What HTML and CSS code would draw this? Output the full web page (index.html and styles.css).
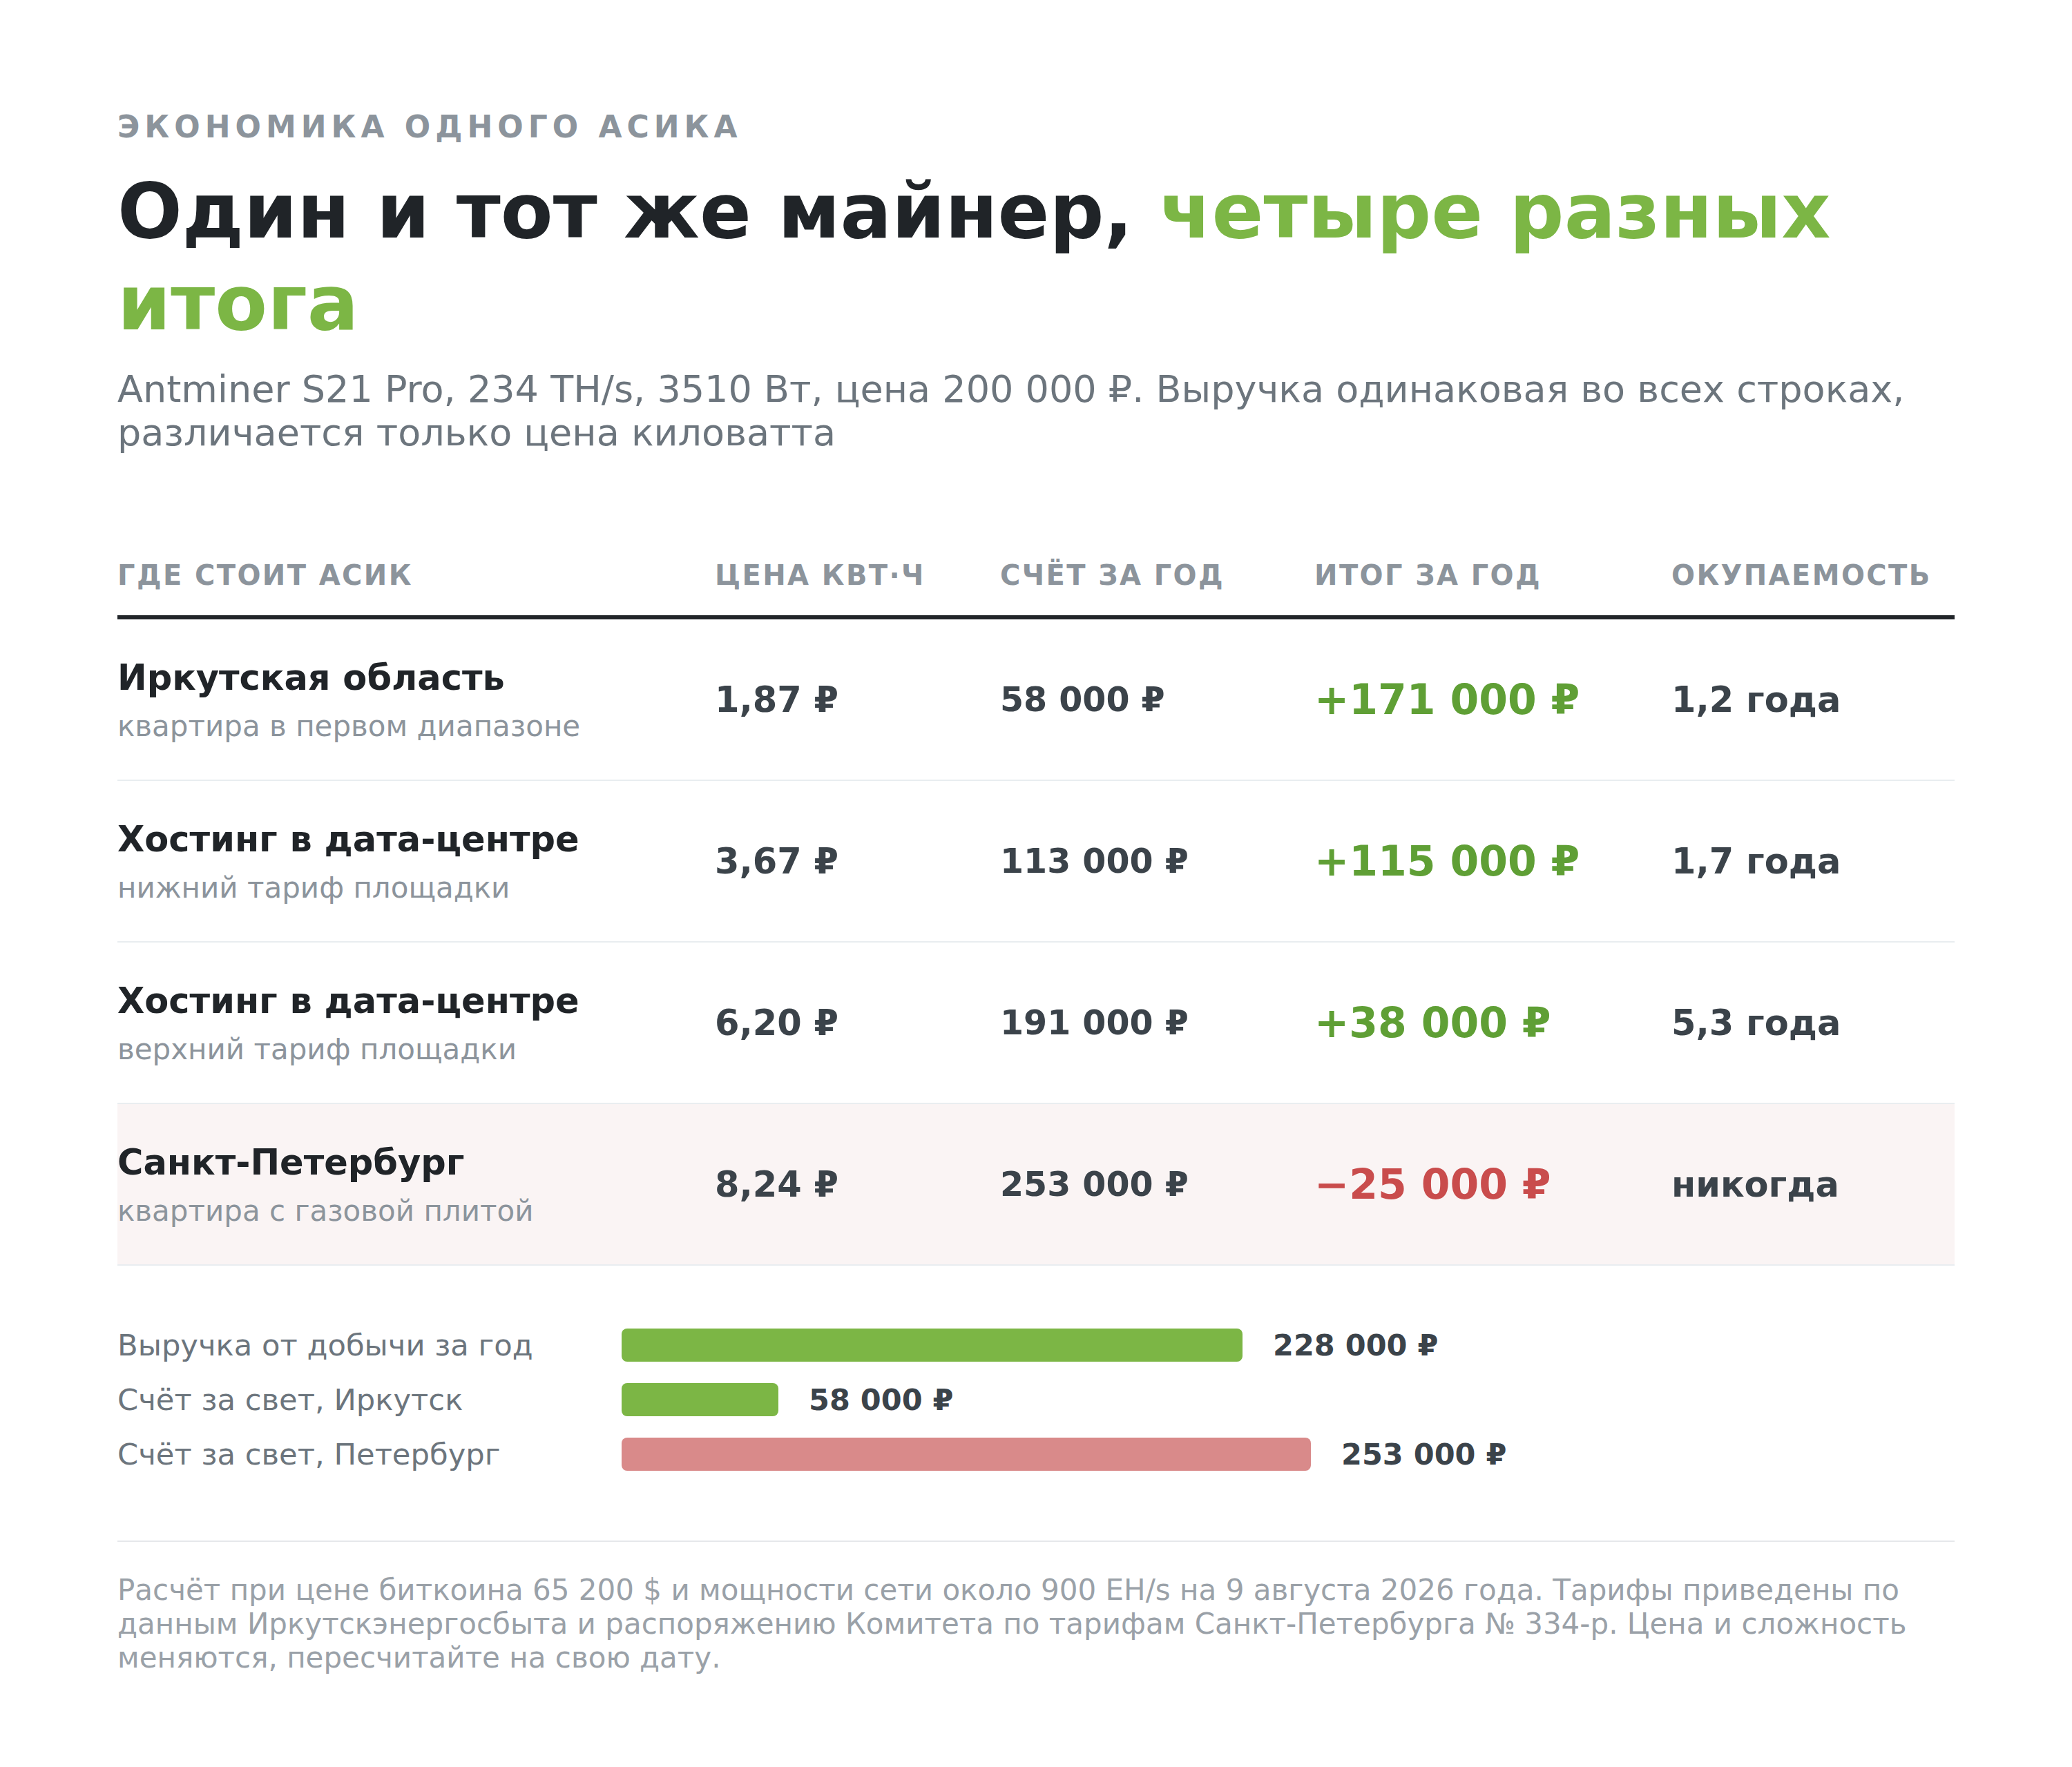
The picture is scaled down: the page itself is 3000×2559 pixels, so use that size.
FILE: index.html
```html
<!DOCTYPE html>
<html lang="ru">
<head>
<meta charset="utf-8">
<title>Экономика одного асика</title>
<link rel="stylesheet" href="styles.css">
</head>
<body>
<main class="page">
  <p class="eyebrow">ЭКОНОМИКА ОДНОГО АСИКА</p>
  <h1 class="title">Один и тот же майнер, <span class="accent">четыре разных</span> <span class="accent">итога</span></h1>
  <p class="lead">Antminer S21 Pro, 234 TH/s, 3510 Вт, цена 200 000 ₽. Выручка одинаковая во всех строках, различается только цена киловатта</p>

  <section class="table">
    <div class="row head">
      <div>ГДЕ СТОИТ АСИК</div>
      <div>ЦЕНА КВТ·Ч</div>
      <div>СЧЁТ ЗА ГОД</div>
      <div>ИТОГ ЗА ГОД</div>
      <div>ОКУПАЕМОСТЬ</div>
    </div>
    <div class="row item">
      <div class="place"><div class="name">Иркутская область</div><div class="sub">квартира в первом диапазоне</div></div>
      <div class="val">1,87 ₽</div>
      <div class="val bill">58 000 ₽</div>
      <div class="total pos">+171 000 ₽</div>
      <div class="val">1,2 года</div>
    </div>
    <div class="row item">
      <div class="place"><div class="name">Хостинг в дата-центре</div><div class="sub">нижний тариф площадки</div></div>
      <div class="val">3,67 ₽</div>
      <div class="val bill">113 000 ₽</div>
      <div class="total pos">+115 000 ₽</div>
      <div class="val">1,7 года</div>
    </div>
    <div class="row item">
      <div class="place"><div class="name">Хостинг в дата-центре</div><div class="sub">верхний тариф площадки</div></div>
      <div class="val">6,20 ₽</div>
      <div class="val bill">191 000 ₽</div>
      <div class="total pos">+38 000 ₽</div>
      <div class="val">5,3 года</div>
    </div>
    <div class="row item loss">
      <div class="place"><div class="name">Санкт-Петербург</div><div class="sub">квартира с газовой плитой</div></div>
      <div class="val">8,24 ₽</div>
      <div class="val bill">253 000 ₽</div>
      <div class="total neg">−25 000 ₽</div>
      <div class="val">никогда</div>
    </div>
  </section>

  <section class="bars">
    <div class="bar-label">Выручка от добычи за год</div>
    <div class="bar-track"><div class="bar green" style="width:899px"></div><div class="bar-value">228 000 ₽</div></div>
    <div class="bar-label">Счёт за свет, Иркутск</div>
    <div class="bar-track"><div class="bar green" style="width:227px"></div><div class="bar-value">58 000 ₽</div></div>
    <div class="bar-label">Счёт за свет, Петербург</div>
    <div class="bar-track"><div class="bar red" style="width:998px"></div><div class="bar-value">253 000 ₽</div></div>
  </section>

  <footer class="note">Расчёт при цене биткоина 65 200 $ и мощности сети около 900 EH/s на 9 августа 2026 года. Тарифы приведены по данным Иркутскэнергосбыта и распоряжению Комитета по тарифам Санкт-Петербурга № 334-р. Цена и сложность меняются, пересчитайте на свою дату.</footer>
</main>
</body>
</html>
```

FILE: styles.css
```css
html, body {
  margin: 0;
  padding: 0;
  background: #ffffff;
}

body {
  font-family: "DejaVu Sans", "Noto Sans", sans-serif;
}

.page {
  width: 2660px;
  margin-left: 170px;
  padding-top: 157px;
  padding-bottom: 120px;
}

.eyebrow {
  margin: 0;
  font-size: 44px;
  line-height: 53px;
  font-weight: 700;
  letter-spacing: 7px;
  color: #8c949c;
}

.title {
  margin: 30px 0 0;
  font-size: 110.4px;
  line-height: 133px;
  font-weight: 700;
  color: #202428;
}

.accent {
  color: #7cb645;
}

.lead {
  margin: 26px 0 0;
  font-size: 54px;
  line-height: 63px;
  color: #6c757d;
}

.table {
  margin-top: 151px;
}

.row {
  display: grid;
  grid-template-columns: 865px 413px 455px 517px 1fr;
  align-items: center;
}

.head {
  font-size: 40px;
  line-height: 48px;
  font-weight: 700;
  letter-spacing: 0.06em;
  color: #8c949c;
  padding-bottom: 34px;
  border-bottom: 6px solid #212529;
}

.item {
  height: 232px;
  border-bottom: 2px solid #e9edf0;
}

.item.loss {
  background: #faf4f4;
}

.name {
  font-size: 51px;
  line-height: 65px;
  font-weight: 700;
  color: #202428;
}

.sub {
  margin-top: 12px;
  font-size: 42px;
  line-height: 52px;
  color: #8c949c;
}

.val {
  font-size: 51px;
  font-weight: 700;
  color: #3b434a;
}

.val.bill {
  font-size: 49px;
}

.total {
  font-size: 60px;
  font-weight: 700;
}

.pos {
  color: #5f9f35;
}

.neg {
  color: #c94c4c;
}

.bars {
  margin-top: 91px;
  display: grid;
  grid-template-columns: 730px 1fr;
  row-gap: 31px;
  align-items: center;
}

.bar-label {
  font-size: 43.3px;
  line-height: 48px;
  color: #6c757d;
}

.bar-track {
  display: flex;
  align-items: center;
  gap: 44px;
  height: 48px;
}

.bar {
  height: 48px;
  border-radius: 8px;
}

.bar.green {
  background: #7cb645;
}

.bar.red {
  background: #d98a8a;
}

.bar-value {
  font-size: 43px;
  line-height: 48px;
  font-weight: 700;
  color: #3b434a;
}

.note {
  margin-top: 101px;
  border-top: 2px solid #e6e8eb;
  padding-top: 45px;
  font-size: 42px;
  line-height: 49px;
  color: #9aa1a8;
}
```
